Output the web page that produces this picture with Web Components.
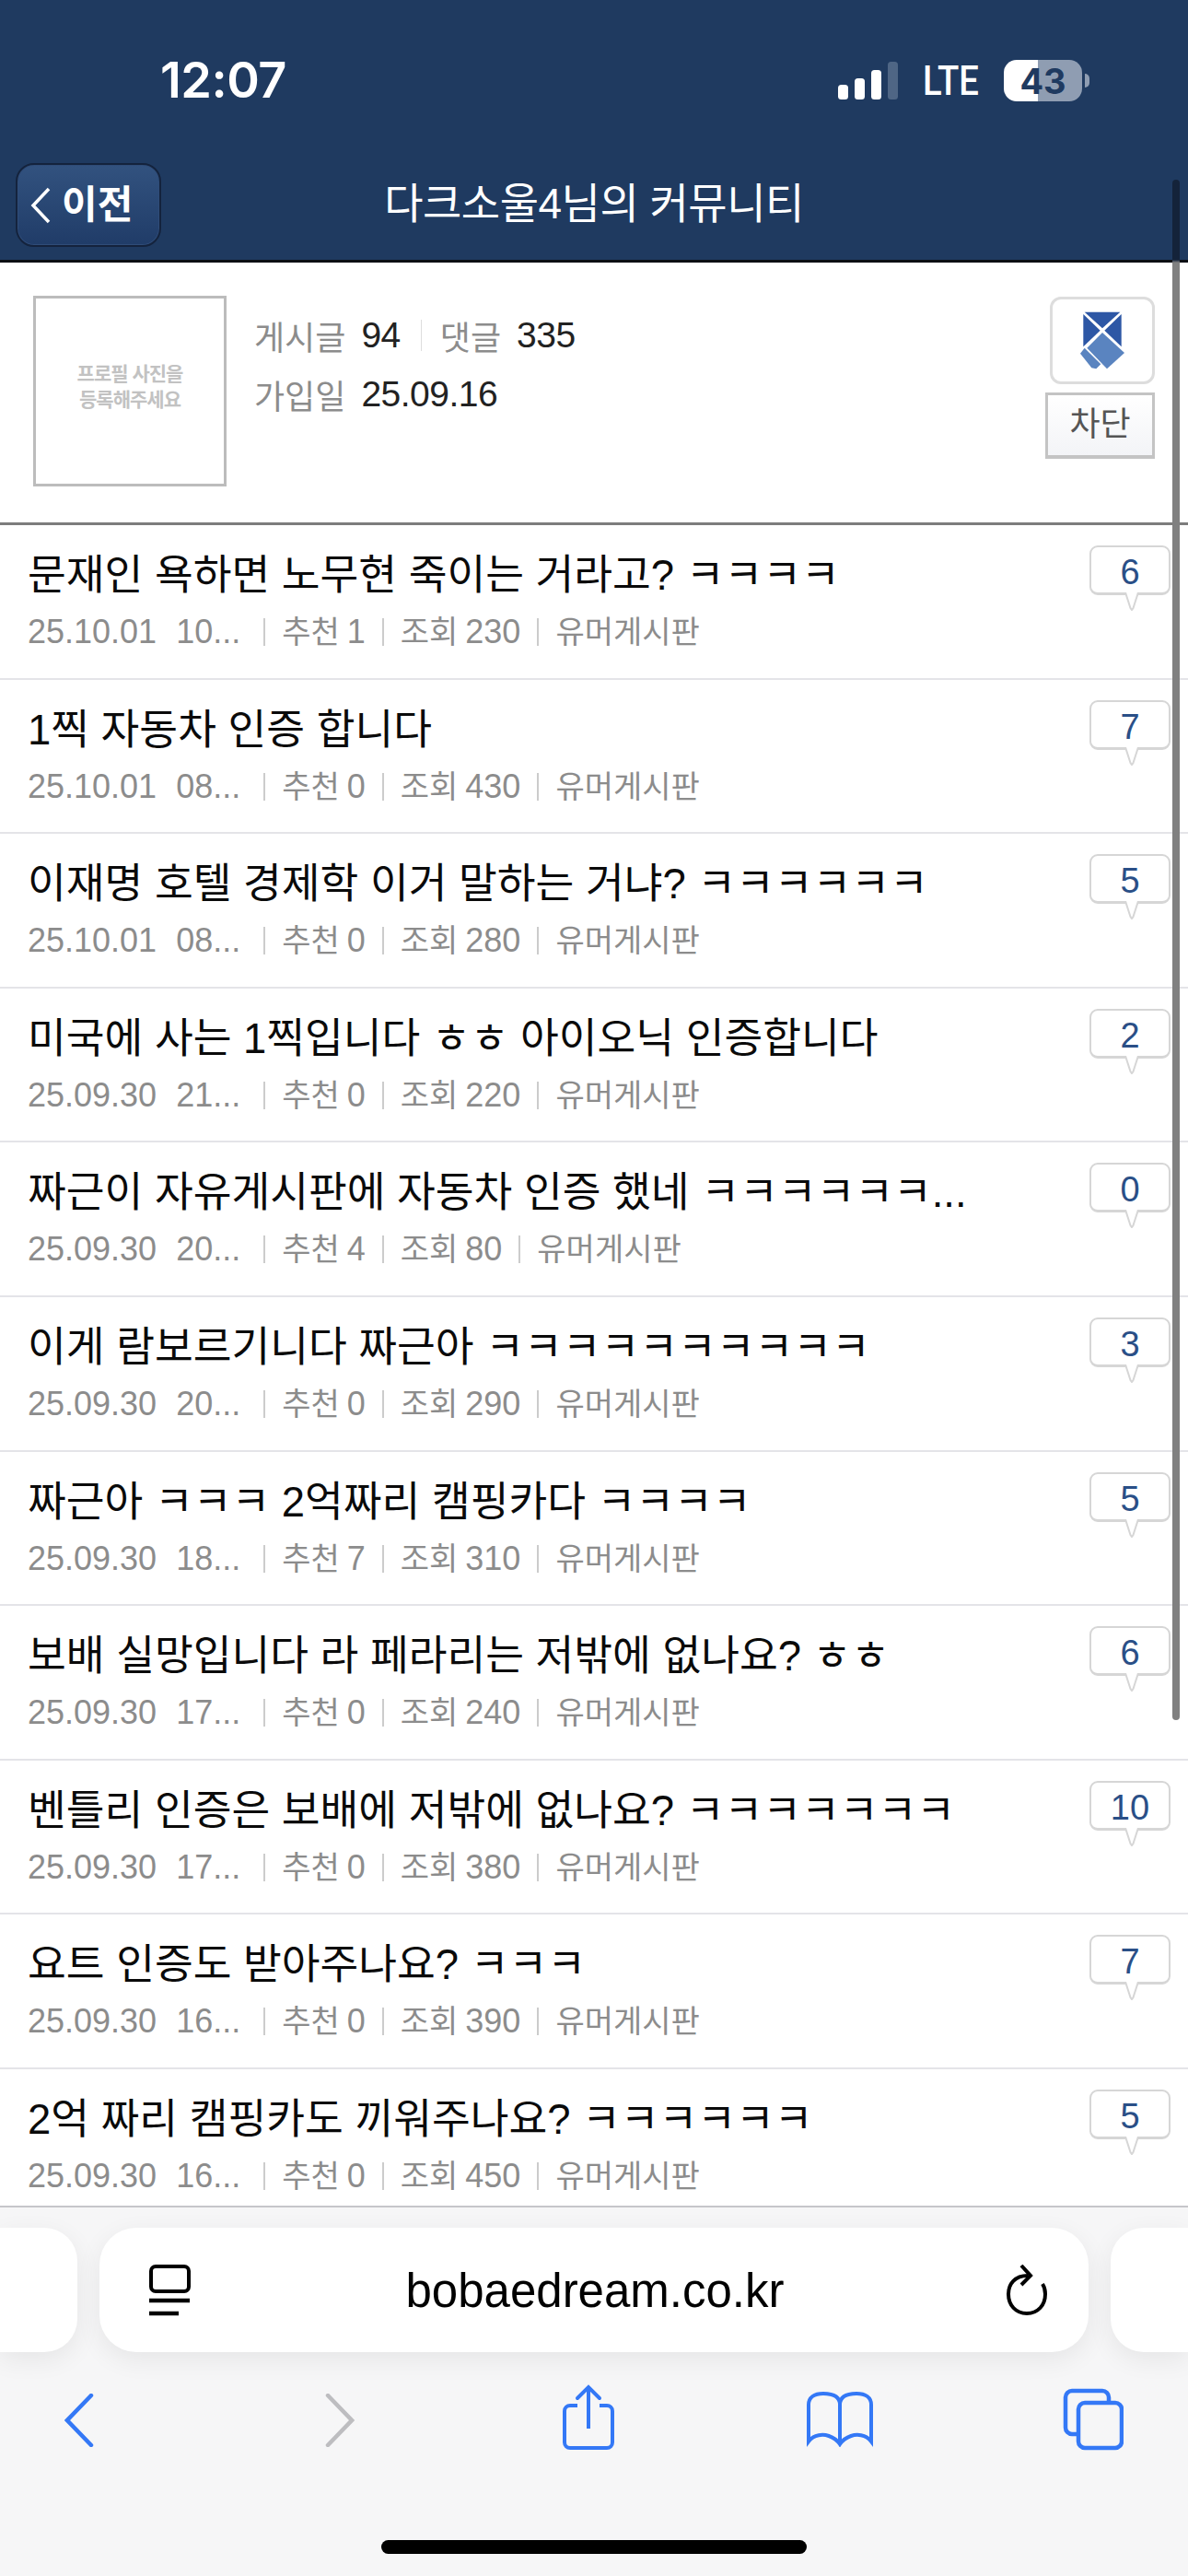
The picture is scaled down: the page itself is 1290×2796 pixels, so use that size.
<!DOCTYPE html>
<html lang="ko">
<head>
<meta charset="utf-8">
<title>커뮤니티</title>
<style>
    html, body { margin: 0; padding: 0; background: #fff; }
    body {
        width: 1290px;
        height: 2796px;
        overflow: hidden;
        position: relative;
        display: flex;
        flex-direction: column;
        font-family: "Liberation Sans", "Noto Sans CJK KR", sans-serif;
    }
    #rows { display: block; height: 1824px; overflow: hidden; flex: none; }
</style>
</head>
<body>
<status-bar></status-bar>
<nav-header>다크소울4님의 커뮤니티</nav-header>
<profile-card></profile-card>
<div id="rows"></div>
<safari-bar></safari-bar>
<page-scrollbar></page-scrollbar>

<script>
const KR = `"Liberation Sans", "Noto Sans CJK KR", sans-serif`;

class StatusBar extends HTMLElement {
    constructor() {
        super();
        this.attachShadow({ mode: "open" }).innerHTML = `
            <style>
                :host { display: flex; align-items: center; height: 177px; flex: none; background: #1f3a60; color: #fff; box-sizing: border-box; padding: 0 107px 0 174px; justify-content: space-between; font-family: Inter, "Liberation Sans", sans-serif; }
                .time { font-size: 54px; font-weight: 600; letter-spacing: -0.5px; line-height: 1; margin-top: -3px; }
                .right { display: flex; align-items: center; margin-top: -2px; }
                .sig { display: block; }
                .lte { display: block; width: 61px; font-family: Roboto, sans-serif; font-size: 45px; font-weight: 500; margin: 0 27px; line-height: 1; transform: scaleX(.85); transform-origin: left center; white-space: nowrap; }
                .bat { position: relative; width: 85px; height: 45px; border-radius: 14px; background: linear-gradient(90deg, #fff 0, #fff 37px, #8f9db2 37px, #8f9db2 100%); color: #1f3a60; font-size: 38px; font-weight: 700; display: flex; align-items: center; justify-content: center; line-height: 1; }
                .tip { width: 5px; height: 15px; background: #8f9db2; border-radius: 0 8px 8px 0; margin-left: 3px; }
            </style>
            <span class="time">12:07</span>
            <span class="right">
                <svg class="sig" width="65" height="41" viewBox="0 0 65 41">
                    <rect x="0" y="25" width="11" height="16" rx="3.5" fill="#fff"/>
                    <rect x="18" y="18" width="11" height="23" rx="3.5" fill="#fff"/>
                    <rect x="36" y="9" width="11" height="32" rx="3.5" fill="#fff"/>
                    <rect x="54" y="0" width="11" height="41" rx="3.5" fill="#4f6685"/>
                </svg>
                <span class="lte">LTE</span>
                <span class="bat">43</span><span class="tip"></span>
            </span>`;
    }
}

class NavHeader extends HTMLElement {
    constructor() {
        super();
        this.attachShadow({ mode: "open" }).innerHTML = `
            <style>
                :host { display: block; flex: none; height: 105px; background: #1f3a60; border-bottom: 3px solid #0c0f14; position: relative; font-family: ${KR}; color: #fff; box-sizing: content-box; padding-left: 17px; }
                .back { display: inline-flex; align-items: center; box-sizing: border-box; width: 158px; height: 91px; border: 2px solid #14233d; border-radius: 20px; background: linear-gradient(#32527f, #203c68); box-shadow: inset 0 0 0 1px #2f4c78; padding-left: 14px; gap: 12px; font-size: 42px; font-weight: 700; line-height: 1; }
                .back svg { flex: none; }
                .title { position: absolute; left: 0; right: 0; top: -1px; height: 91px; text-align: center; font-size: 46px; line-height: 91px; letter-spacing: -0.5px; }
            </style>
            <span class="back">
                <svg width="22" height="40" viewBox="0 0 22 40"><path d="M20 2 L3 20 L20 38" fill="none" stroke="#fff" stroke-width="3.5"/></svg>
                <span>이전</span>
            </span>
            <div class="title"><slot></slot></div>`;
    }
}

class ProfileCard extends HTMLElement {
    constructor() {
        super();
        this.attachShadow({ mode: "open" }).innerHTML = `
            <style>
                :host { display: flex; flex: none; height: 285px; box-sizing: border-box; border-bottom: 3px solid #7c7c7c; padding: 36px 36px 0 36px; font-family: ${KR}; background: #fff; }
                .photo { width: 210px; height: 207px; box-sizing: border-box; border: 3px solid #bcbcbc; display: flex; align-items: center; justify-content: center; text-align: center; color: #c2c2c2; font-size: 21px; font-weight: 700; line-height: 28px; letter-spacing: -1px; flex: none; padding-bottom: 10px; }
                .stats { flex: 1; padding: 11px 0 0 30px; font-size: 36px; color: #8c8c8c; }
                .line { display: flex; align-items: center; height: 64px; }
                b { font-weight: 400; font-size: 39px; color: #222; margin-left: 17px; letter-spacing: -0.5px; }
                i { display: block; width: 1px; height: 34px; background: #ddd; margin: 0 20px 0 22px; }
                .side { width: 119px; flex: none; display: flex; flex-direction: column; align-items: flex-end; padding-top: 1px; }
                .icon { width: 114px; height: 95px; box-sizing: border-box; border: 3px solid #ddd; border-radius: 12px; display: flex; align-items: center; justify-content: center; }
                .block { width: 119px; height: 72px; margin-top: 9px; box-sizing: border-box; border: 3px solid #c4c4c4; border-bottom-width: 4px; background: linear-gradient(#fff, #f3f4f7); color: #555; font-size: 36px; text-align: center; line-height: 64px; }
            </style>
            <div class="photo">프로필 사진을<br>등록해주세요</div>
            <div class="stats">
                <div class="line">게시글<b>94</b><i></i>댓글<b>335</b></div>
                <div class="line">가입일<b>25.09.16</b></div>
            </div>
            <div class="side">
                <div class="icon">
                    <svg width="48" height="63" viewBox="218 113 144 189">
                        <polygon points="232,115 348,115 290,168" fill="#2d57a5"/>
                        <polygon points="228,122 283,175 228,228" fill="#2d57a5"/>
                        <polygon points="352,122 297,175 352,228" fill="#2d57a5"/>
                        <polygon points="290,182 362,248 305,300 240,232" fill="#5a84c0"/>
                        <polygon points="232,232 285,285 270,300 255,297 218,250" fill="#5a84c0"/>
                    </svg>
                </div>
                <div class="block">차단</div>
            </div>`;
    }
}

class PostRow extends HTMLElement {
    static get observedAttributes() {
        return ["title", "date", "time", "rec", "views", "count"];
    }

    connectedCallback() {
        if (!this.shadowRoot) this.attachShadow({ mode: "open" });
        this.render();
    }

    render() {
        const a = (n) => this.getAttribute(n) || "";
        this.shadowRoot.innerHTML = `
            <style>
                :host { display: flex; height: 167.6px; box-sizing: border-box; border-bottom: 2px solid #e4e4e8; padding: 0 19px 0 30px; font-family: ${KR}; background: #fff; }
                .main { flex: 1; min-width: 0; padding-top: 23px; }
                .title { font-size: 45.4px; line-height: 64px; color: #0a0a0a; white-space: nowrap; overflow: hidden; text-overflow: ellipsis; width: 1040px; }
                .meta { display: flex; align-items: center; font-size: 36px; line-height: 56px; color: #8c8c8c; margin-top: 1px; white-space: nowrap; }
                .date { margin-right: 21px; }
                .time { min-width: 77px; }
                .k { font-size: 34px; margin-right: 8px; }
                .k:last-child { margin-right: 0; }
                i { width: 2px; height: 30px; background: #ccc; margin: 0 18px; flex: none; }
                .bubble { position: relative; flex: none; width: 88px; height: 54px; margin-top: 22px; box-sizing: border-box; border: 2px solid #d6d6d6; border-bottom-width: 3px; border-radius: 9px; background: #fff; color: #2a4f87; font-size: 38px; line-height: 54px; text-align: center; }
                .tail { position: absolute; left: 36px; top: 49px; }
            </style>
            <div class="main">
                <div class="title">${a("title")}</div>
                <div class="meta"><span class="date">${a("date")}</span><span class="time">${a("time")}</span><i></i><span class="k">추천</span>${a("rec")}<i></i><span class="k">조회</span>${a("views")}<i></i><span class="k">유머게시판</span></div>
            </div>
            <div class="bubble">${a("count")}<svg class="tail" width="16" height="20" viewBox="0 0 16 20"><path d="M1 0 L6.5 17 L8 19 L9.5 17 L15 0" fill="#fff" stroke="#d6d6d6" stroke-width="2"/></svg></div>`;
    }
}

class SafariBar extends HTMLElement {
    constructor() {
        super();
        this.attachShadow({ mode: "open" }).innerHTML = `
            <style>
                :host { display: block; flex: 1; background: #f6f6f7; border-top: 2px solid #c6c6ca; box-sizing: border-box; position: relative; font-family: "Liberation Sans", sans-serif; min-height: 0; }
                .tabs { display: grid; grid-template-columns: 84px 1074px 84px; column-gap: 24px; padding-top: 22px; }
                .pill { height: 135px; background: #fff; box-shadow: 0 8px 28px rgba(0,0,0,.07); }
                .l { border-radius: 0 36px 36px 0; }
                .r { border-radius: 36px 0 0 36px; }
                .c { border-radius: 40px; display: flex; align-items: center; justify-content: space-between; padding: 0 44px 0 54px; font-size: 51px; color: #000; }
                .url { margin: 2px 8px 0 0; }
                .tools { display: flex; height: 72px; margin-top: 39px; position: relative; }
                .tool { position: absolute; top: 0; }
                .home { position: absolute; left: 414px; bottom: 24px; width: 462px; height: 15px; background: #000; border-radius: 8px; }
            </style>
            <div class="tabs">
                <div class="pill l"></div>
                <div class="pill c">
                    <svg width="46" height="56" viewBox="0 0 46 56" fill="none" stroke="#000" stroke-width="4"><rect x="2" y="2" width="41" height="27" rx="5"/><path d="M0 39 H44" stroke-width="4.5"/><path d="M0 53 H32" stroke-width="4.5"/></svg>
                    <span class="url">bobaedream.co.kr</span>
                    <svg width="46" height="56" viewBox="0 0 46 56" fill="none" stroke="#000" stroke-width="4"><path d="M24 12 C10 12 3 21 3 32 C3 44 11 53 23 53 C35 53 43 44 43 32 C43 28 42 24 40 21"/><path d="M17 1 L27 12 L17 22"/></svg>
                </div>
                <div class="pill r"></div>
            </div>
            <div class="tools">
                <svg class="tool" style="left:70px;top:6px" width="32" height="58" viewBox="0 0 32 58" fill="none" stroke="#3478f6" stroke-width="4.5" stroke-linecap="round"><path d="M29 2 L3 29 L29 56"/></svg>
                <svg class="tool" style="left:353px;top:6px" width="32" height="58" viewBox="0 0 32 58" fill="none" stroke="#bdbdc0" stroke-width="4.5" stroke-linecap="round"><path d="M3 2 L29 29 L3 56"/></svg>
                <svg class="tool" style="left:611px;top:-4px" width="56" height="72" viewBox="0 0 56 72" fill="none" stroke="#3478f6" stroke-width="4"><path d="M16 23 H8 A6 6 0 0 0 2 29 V63 A6 6 0 0 0 8 69 H48 A6 6 0 0 0 54 63 V29 A6 6 0 0 0 48 23 H40"/><path d="M28 48 V3"/><path d="M16 15 L28 3 L40 15" stroke-linecap="round"/></svg>
                <svg class="tool" style="left:876px;top:4px" width="72" height="60" viewBox="0 0 72 60" fill="none" stroke="#3478f6" stroke-width="4"><path d="M36 14 C36 4 26 2 18 2 C8 2 2 6 2 14 V54 C8 46 18 46 24 48 C30 50 34 54 36 57 C38 54 42 50 48 48 C54 46 64 46 70 54 V14 C70 6 64 2 54 2 C46 2 36 4 36 14 Z"/><path d="M36 14 V57"/></svg>
                <svg class="tool" style="left:1154px;top:0" width="66" height="68" viewBox="0 0 66 68" fill="none" stroke="#3478f6" stroke-width="4.5"><path d="M15 50 H10 A7 7 0 0 1 3 43 V10 A7 7 0 0 1 10 3 H43 A7 7 0 0 1 50 10 V15"/><rect x="17" y="16" width="47" height="49" rx="7"/></svg>
            </div>
            <div class="home"></div>`;
    }
}

class PageScrollbar extends HTMLElement {
    constructor() {
        super();
        this.attachShadow({ mode: "open" }).innerHTML = `
            <style>
                :host { position: absolute; left: 1273px; top: 195px; width: 8px; height: 1672px; border-radius: 4px; background: linear-gradient(#14233a 0, #14233a 87px, #808080 90px, #808080 100%); }
            </style>`;
    }
}

customElements.define("status-bar", StatusBar);
customElements.define("nav-header", NavHeader);
customElements.define("profile-card", ProfileCard);
customElements.define("post-row", PostRow);
customElements.define("safari-bar", SafariBar);
customElements.define("page-scrollbar", PageScrollbar);

const posts = [
    ["문재인 욕하면 노무현 죽이는 거라고? ㅋㅋㅋㅋ", "25.10.01", "10...", 1, 230, 6],
    ["1찍 자동차 인증 합니다", "25.10.01", "08...", 0, 430, 7],
    ["이재명 호텔 경제학 이거 말하는 거냐? ㅋㅋㅋㅋㅋㅋ", "25.10.01", "08...", 0, 280, 5],
    ["미국에 사는 1찍입니다 ㅎㅎ 아이오닉 인증합니다", "25.09.30", "21...", 0, 220, 2],
    ["짜근이 자유게시판에 자동차 인증 했네 ㅋㅋㅋㅋㅋㅋ...", "25.09.30", "20...", 4, 80, 0],
    ["이게 람보르기니다 짜근아 ㅋㅋㅋㅋㅋㅋㅋㅋㅋㅋ", "25.09.30", "20...", 0, 290, 3],
    ["짜근아 ㅋㅋㅋ 2억짜리 캠핑카다 ㅋㅋㅋㅋ", "25.09.30", "18...", 7, 310, 5],
    ["보배 실망입니다 라 페라리는 저밖에 없나요? ㅎㅎ", "25.09.30", "17...", 0, 240, 6],
    ["벤틀리 인증은 보배에 저밖에 없나요? ㅋㅋㅋㅋㅋㅋㅋ", "25.09.30", "17...", 0, 380, 10],
    ["요트 인증도 받아주나요? ㅋㅋㅋ", "25.09.30", "16...", 0, 390, 7],
    ["2억 짜리 캠핑카도 끼워주나요? ㅋㅋㅋㅋㅋㅋ", "25.09.30", "16...", 0, 450, 5],
];

const rows = document.getElementById("rows");
for (const [title, date, time, rec, views, count] of posts) {
    const row = document.createElement("post-row");
    row.setAttribute("title", title);
    row.setAttribute("date", date);
    row.setAttribute("time", time);
    row.setAttribute("rec", rec);
    row.setAttribute("views", views);
    row.setAttribute("count", count);
    rows.appendChild(row);
}
</script>
</body>
</html>
